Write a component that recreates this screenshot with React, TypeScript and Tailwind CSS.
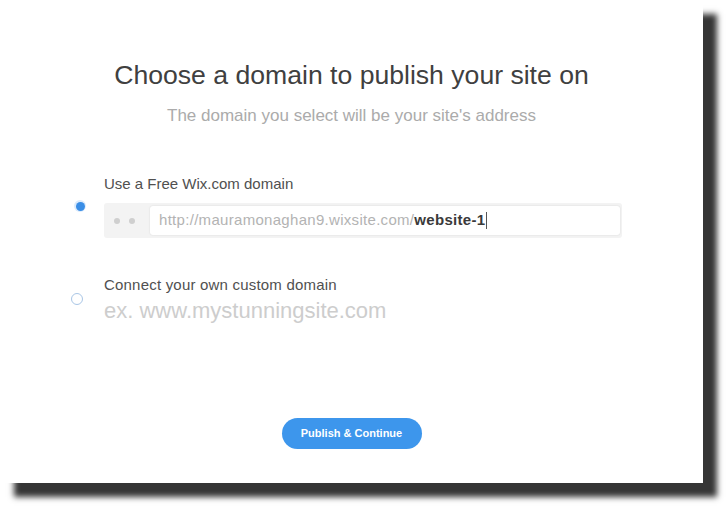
import * as React from "react";

const font = { fontFamily: '"Liberation Sans", Arial, sans-serif' };

function Radio({ checked }: { checked: boolean }) {
  if (checked) {
    return (
      <span className="flex h-[12px] w-[12px] items-center justify-center rounded-full bg-[#dcebfb]">
        <span className="h-[9px] w-[9px] rounded-full bg-[#3a8ee6]" />
      </span>
    );
  }
  return <span className="block h-[12px] w-[12px] rounded-full border border-[#a9c6e6] bg-white" />;
}

export default function App() {
  return (
    <div className="h-[507px] w-[726px] bg-white" style={font}>
      <div className="flex h-[483px] w-[703px] flex-col bg-white shadow-[14px_14px_6px_#353535]">
        <h1 className="pt-[59px] text-center text-[26.6px] leading-[32px] text-[#404040]">
          Choose a domain to publish your site on
        </h1>
        <p className="mt-[15px] text-center text-[17px] leading-[20px] text-[#ababab]">
          The domain you select will be your site's address
        </p>

        <div className="mt-[49px] flex pl-[74px]">
          <div className="w-[30px] pt-[25px]">
            <Radio checked />
          </div>
          <div>
            <div className="text-[15px] leading-[18px] text-[#505050]">Use a Free Wix.com domain</div>
            <div className="mt-[10px] flex h-[35px] w-[518px] items-center rounded-[3px] bg-[#f3f3f3] pl-[10px] pr-[2px]">
              <span className="h-[6px] w-[6px] rounded-full bg-[#cfcfcf]" />
              <span className="ml-[9px] h-[6px] w-[6px] rounded-full bg-[#cfcfcf]" />
              <div className="ml-[15px] flex h-[29px] flex-1 items-center rounded-[3px] bg-white pl-[9px] text-[15px] shadow-[0_0_2px_rgba(0,0,0,0.12)]">
                <span className="tracking-[0.3px] text-[#b3b3b3]">http://mauramonaghan9.wixsite.com/</span>
                <span className="font-bold tracking-[0.3px] text-[#3a3a3a]">website-1</span>
                <span className="ml-[1px] h-[17px] w-px bg-[#555]" />
              </div>
            </div>
          </div>
        </div>

        <div className="mt-[38px] flex pl-[71px]">
          <div className="w-[33px] pt-[17px]">
            <Radio checked={false} />
          </div>
          <div>
            <div className="text-[15px] leading-[18px] tracking-[0.2px] text-[#505050]">Connect your own custom domain</div>
            <div className="mt-[4px] text-[22px] leading-[26px] text-[#cdcdcd]">ex. www.mystunningsite.com</div>
          </div>
        </div>

        <div className="mt-[94px] flex justify-center">
          <button className="h-[31px] w-[140px] rounded-full bg-[#3d96ec] text-[11px] font-bold text-white">
            Publish &amp; Continue
          </button>
        </div>
      </div>
    </div>
  );
}
